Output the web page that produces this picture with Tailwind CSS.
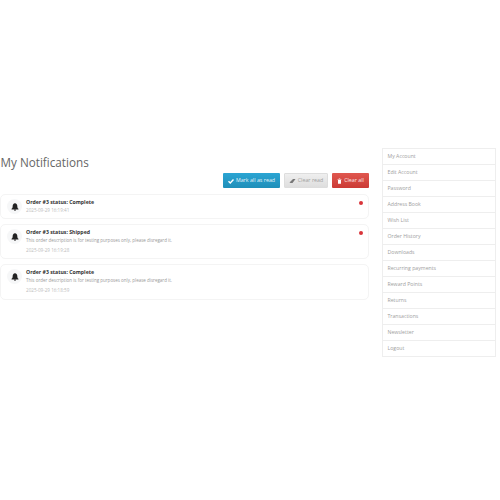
<!DOCTYPE html>
<html lang="en">
<head>
<meta charset="UTF-8" />
<title>My Notifications</title>
<script src="https://cdn.jsdelivr.net/npm/@tailwindcss/browser@4"></script>
</head>
<body class="bg-white font-['Open_Sans',sans-serif] overflow-hidden">
<div class="w-[500px] h-[500px] pt-[148px] pr-[4px] flex justify-between">

  <!-- Content -->
  <div class="w-[369px]">
    <h1 class="text-[11.7px] leading-[20px] mt-[4px] pl-[0.5px] text-[#666]">My Notifications</h1>

    <div class="flex justify-end gap-[4px] mt-[1px] h-[15px]">
      <button class="w-[57px] h-[15px] flex items-center justify-center gap-[2px] rounded-[1px] bg-gradient-to-b from-[#2ba5d3] to-[#1f8fb9] text-[#e4f3f9] text-[5.3px]">
        <svg class="w-[6px] h-[6px]" viewBox="0 0 12 12"><path d="M1 6.500 L4.500 10 L11 3" fill="none" stroke="white" stroke-width="2.800"/></svg>
        Mark all as read
      </button>
      <button class="w-[44px] h-[15px] flex items-center justify-center gap-[2px] rounded-[1px] bg-gradient-to-b from-[#efefef] to-[#dedede] border border-[#dddddd] text-[#a0a0a0] text-[5.3px]">
        <svg class="w-[7px] h-[6px]" viewBox="0 0 14 12"><path d="M1 9 L8 2 H13 L7 10 H3 Z" fill="#777"/></svg>
        Clear read
      </button>
      <button class="w-[37px] h-[15px] flex items-center justify-center gap-[2px] rounded-[1px] bg-gradient-to-b from-[#e0574f] to-[#cb3a35] text-[#fbe6e5] text-[5.3px]">
        <svg class="w-[5px] h-[6px]" viewBox="0 0 10 12"><path d="M1 2 H9 V3 H1 Z M3.500 0.500 H6.500 V1.500 H3.500 Z M2 4 H8 V11.500 H2 Z" fill="white"/></svg>
        Clear all
      </button>
    </div>

    <div class="mt-[6px] flex flex-col gap-[5px]">
      <div class="relative h-[25px] flex items-start border border-[#f4f4f4] rounded-[5px] pl-[6px] pt-[3px]">
        <div class="w-[15px] h-[15px] rounded-full bg-[#f6f7f8] flex items-center justify-center mt-[1px] shrink-0">
          <svg class="w-[8px] h-[8px]" viewBox="0 0 12 12"><path d="M6 0.500 C8.300 0.800 9.500 2.600 9.500 4.800 C9.500 7 10.200 8 11.200 8.800 V9.600 H0.800 V8.800 C1.800 8 2.500 7 2.500 4.800 C2.500 2.600 3.700 0.800 6 0.500 Z M4.600 10.200 H7.400 C7.400 11.100 6.700 11.700 6 11.700 C5.300 11.700 4.600 11.100 4.600 10.200 Z" fill="#222"/></svg>
        </div>
        <div class="ml-[4px]">
          <p class="text-[5.2px] leading-[8px] font-bold text-[#333]">Order #3 status: Complete</p>
          <p class="text-[4.6px] leading-[7px] mt-[1px] text-[#bbb]">2025-09-29 16:19:41</p>
        </div>
        <span class="absolute right-[5px] top-[6px] w-[4px] h-[4px] rounded-full bg-[#d9343a]"></span>
      </div>

      <div class="relative h-[35px] flex items-start border border-[#f4f4f4] rounded-[5px] pl-[6px] pt-[3px]">
        <div class="w-[15px] h-[15px] rounded-full bg-[#f6f7f8] flex items-center justify-center mt-[1px] shrink-0">
          <svg class="w-[8px] h-[8px]" viewBox="0 0 12 12"><path d="M6 0.500 C8.300 0.800 9.500 2.600 9.500 4.800 C9.500 7 10.200 8 11.200 8.800 V9.600 H0.800 V8.800 C1.800 8 2.500 7 2.500 4.800 C2.500 2.600 3.700 0.800 6 0.500 Z M4.600 10.200 H7.400 C7.400 11.100 6.700 11.700 6 11.700 C5.300 11.700 4.600 11.100 4.600 10.200 Z" fill="#222"/></svg>
        </div>
        <div class="ml-[4px]">
          <p class="text-[5.2px] leading-[8px] font-bold text-[#333]">Order #3 status: Shipped</p>
          <p class="text-[4.5px] leading-[7px] mt-[1px] text-[#999]">This order description is for testing purposes only, please disregard it.</p>
          <p class="text-[4.6px] leading-[7px] mt-[3px] text-[#bbb]">2025-09-29 16:19:28</p>
        </div>
        <span class="absolute right-[5px] top-[6px] w-[4px] h-[4px] rounded-full bg-[#d9343a]"></span>
      </div>

      <div class="relative h-[36px] flex items-start border border-[#f4f4f4] rounded-[5px] pl-[6px] pt-[3px]">
        <div class="w-[15px] h-[15px] rounded-full bg-[#f6f7f8] flex items-center justify-center mt-[1px] shrink-0">
          <svg class="w-[8px] h-[8px]" viewBox="0 0 12 12"><path d="M6 0.500 C8.300 0.800 9.500 2.600 9.500 4.800 C9.500 7 10.200 8 11.200 8.800 V9.600 H0.800 V8.800 C1.800 8 2.500 7 2.500 4.800 C2.500 2.600 3.700 0.800 6 0.500 Z M4.600 10.200 H7.400 C7.400 11.100 6.700 11.700 6 11.700 C5.300 11.700 4.600 11.100 4.600 10.200 Z" fill="#222"/></svg>
        </div>
        <div class="ml-[4px]">
          <p class="text-[5.2px] leading-[8px] font-bold text-[#333]">Order #3 status: Complete</p>
          <p class="text-[4.5px] leading-[7px] mt-[1px] text-[#999]">This order description is for testing purposes only, please disregard it.</p>
          <p class="text-[4.6px] leading-[7px] mt-[3px] text-[#bbb]">2025-09-29 16:18:59</p>
        </div>
      </div>
    </div>
  </div>

  <!-- Sidebar -->
  <div class="w-[114px] h-[209px] border border-[#eeeeee] flex flex-col divide-y divide-[#eeeeee] text-[5.2px] text-[#a0a0a0]">
    <a class="flex-1 flex items-center pl-[4.500px]">My Account</a>
    <a class="flex-1 flex items-center pl-[4.500px]">Edit Account</a>
    <a class="flex-1 flex items-center pl-[4.500px]">Password</a>
    <a class="flex-1 flex items-center pl-[4.500px]">Address Book</a>
    <a class="flex-1 flex items-center pl-[4.500px]">Wish List</a>
    <a class="flex-1 flex items-center pl-[4.500px]">Order History</a>
    <a class="flex-1 flex items-center pl-[4.500px]">Downloads</a>
    <a class="flex-1 flex items-center pl-[4.500px]">Recurring payments</a>
    <a class="flex-1 flex items-center pl-[4.500px]">Reward Points</a>
    <a class="flex-1 flex items-center pl-[4.500px]">Returns</a>
    <a class="flex-1 flex items-center pl-[4.500px]">Transactions</a>
    <a class="flex-1 flex items-center pl-[4.500px]">Newsletter</a>
    <a class="flex-1 flex items-center pl-[4.500px]">Logout</a>
  </div>
</div>
</body>
</html>
